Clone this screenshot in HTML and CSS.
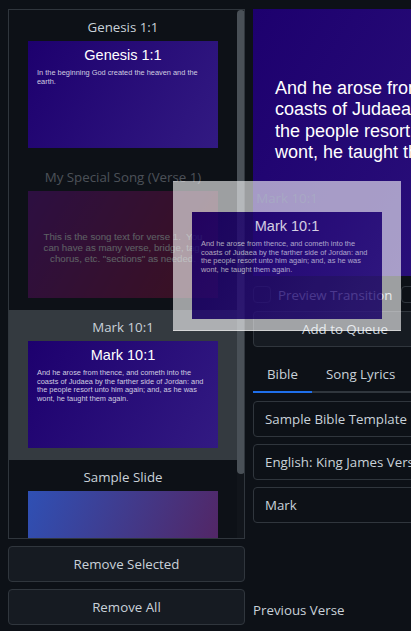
FILE: index.html
```html
<!DOCTYPE html>
<html lang="en">
<head>
<meta charset="utf-8">
<title>Slides</title>
<link rel="stylesheet" href="styles.css">
</head>
<body>
<div class="app">
  <aside class="left">
    <div class="list-box">
      <div class="list">
        <div class="item">
          <div class="label">Genesis 1:1</div>
          <div class="slide bible">
            <div class="slide-title">Genesis 1:1</div>
            <p class="slide-text">In the beginning God created the heaven and the earth.</p>
          </div>
        </div>
        <div class="item dimmed">
          <div class="label">My Special Song (Verse 1)</div>
          <div class="slide song">
            <p class="song-text">This is the song text for verse 1.  You can have as many verse, bridge, tag, chorus, etc. "sections" as needed.</p>
          </div>
        </div>
        <div class="item selected">
          <div class="label">Mark 10:1</div>
          <div class="slide bible">
            <div class="slide-title">Mark 10:1</div>
            <p class="slide-text">And he arose from thence, and cometh into the coasts of Judaea by the farther side of Jordan: and the people resort unto him again; and, as he was wont, he taught them again.</p>
          </div>
        </div>
        <div class="item">
          <div class="label">Sample Slide</div>
          <div class="slide sample"></div>
        </div>
      </div>
      <div class="track"><div class="thumb"></div></div>
    </div>
    <button class="btn side-btn">Remove Selected</button>
    <button class="btn side-btn">Remove All</button>
  </aside>
  <main class="right">
    <div class="preview">
      <p class="preview-text">And he arose from thence, and cometh into the<br>coasts of Judaea by the farther side of Jordan: and<br>the people resort unto him again; and, as he was<br>wont, he taught them again.</p>
    </div>
    <div class="options">
      <span class="check"></span>
      <span class="check-label">Preview Transition</span>
      <span class="small-select"></span>
    </div>
    <button class="btn wide-btn">Add to Queue</button>
    <div class="tabs">
      <span class="tab active">Bible</span>
      <span class="tab">Song Lyrics</span>
    </div>
    <div class="field">Sample Bible Template</div>
    <div class="field">English: King James Version</div>
    <div class="field">Mark</div>
    <div class="verse-nav">Previous Verse</div>
  </main>
</div>
<div class="ghost">
  <div class="label">Mark 10:1</div>
  <div class="slide bible">
    <div class="slide-title">Mark 10:1</div>
    <p class="slide-text">And he arose from thence, and cometh into the coasts of Judaea by the farther side of Jordan: and the people resort unto him again; and, as he was wont, he taught them again.</p>
  </div>
</div>
</body>
</html>
```
FILE: styles.css
```css
* { box-sizing: border-box; }
html, body { margin: 0; height: 100%; }
body {
  background: #0d1117;
  color: #c9d1d9;
  font-family: "Open Sans", "Noto Sans", sans-serif;
  font-size: 13.3px;
  overflow: hidden;
  position: relative;
}
.app {
  display: flex;
  gap: 8px;
  padding: 9px 0 0 8px;
  width: 700px;
}
.left { width: 237px; flex: none; display: flex; flex-direction: column; }
.list-box {
  height: 530px;
  border: 1px solid #30363d;
  display: flex;
  overflow: hidden;
  margin-bottom: 7px;
}
.list { width: 228px; flex: none; }
.track { width: 8px; background: #11151b; flex: none; }
.thumb { height: 464px; background: #495057; border-radius: 4px; }
.item { height: 150px; padding-top: 7px; }
.item.dimmed { opacity: .33; }
.item.selected { background: #343a40; }
.label { height: 24px; line-height: 20px; text-align: center; white-space: nowrap; }
.slide {
  width: 190px;
  height: 107px;
  margin: 0 auto;
  font-family: "Liberation Sans", Arial, sans-serif;
  color: #fff;
}
.bible { background: linear-gradient(120deg, #1d006e, #321a82); }
.song { background: linear-gradient(120deg, #6e0c98, #9a1230); display: flex; align-items: center; padding-top: 6px; }
.sample { background: linear-gradient(110deg, #2f50b4, #56225e); }
.slide-title { font-size: 14.5px; line-height: 20px; text-align: center; padding-top: 4px; }
.slide-text { font-size: 7.4px; line-height: 8.7px; margin: 4px 12px 0 9px; color: #d0cce0; }
.song-text { font-size: 9.7px; line-height: 11px; margin: 0 8px; text-align: center; white-space: pre-wrap; }
.btn {
  display: block;
  font: inherit;
  color: #c9d1d9;
  background: #161b22;
  border: 1px solid #30363d;
  border-radius: 4px;
  text-align: center;
}
.side-btn { height: 36px; width: 237px; margin-bottom: 7px; padding: 0; }
.right { width: 400px; flex: none; }
.preview {
  height: 267px;
  background: linear-gradient(120deg, #1d006e, #321a82);
  display: flex;
  align-items: center;
  font-family: "Liberation Sans", Arial, sans-serif;
  color: #fff;
}
.preview-text {
  font-size: 18px;
  line-height: 21.5px;
  margin: 0 0 44px 22px;
  white-space: nowrap;
}
.options { display: flex; align-items: center; height: 17px; margin-top: 10px; }
.check { width: 18px; height: 17px; border: 1px solid #30363d; border-radius: 4px; margin-right: 7px; }
.check-label { width: 123px; white-space: nowrap; }
.small-select { width: 60px; height: 17px; border: 1px solid #30363d; border-radius: 4px; }
.wide-btn { height: 36px; width: 184px; margin-top: 8px; }
.tabs { display: flex; height: 46px; border-bottom: 2px solid #30363d; margin-bottom: 8px; }
.tab { padding: 0 14px; line-height: 54px; height: 46px; }
.tab.active { border-bottom: 2px solid #1f6feb; width: 59px; }
.field {
  height: 36px;
  width: 400px;
  border: 1px solid #30363d;
  border-radius: 4px;
  background: #0d1117;
  padding: 0 11px;
  line-height: 34px;
  margin-bottom: 7px;
}
.verse-nav { margin-top: 78px; }
.ghost {
  position: absolute;
  left: 173px;
  top: 181px;
  width: 228px;
  height: 150px;
  padding-top: 7px;
  background: rgba(255, 255, 255, .75);
  border-bottom: 1px solid #fff;
  opacity: .8;
}
```
